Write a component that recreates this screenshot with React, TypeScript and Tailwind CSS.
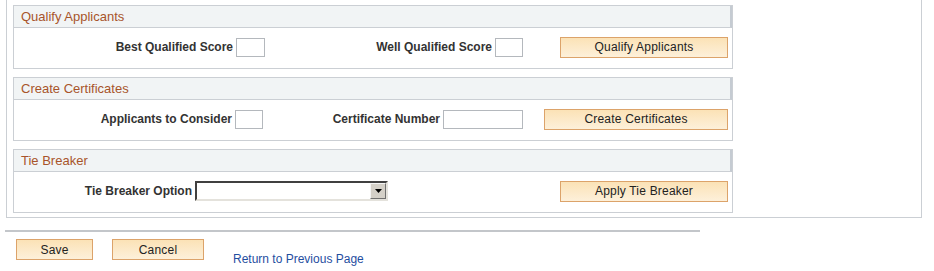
import React from "react";

const font = { fontFamily: '"Liberation Sans", Arial, sans-serif' };

function Section({ title, children }: { title: string; children: React.ReactNode }) {
  return (
    <div className="w-[720px] border border-[#cbcfd4] bg-white">
      <div className="h-[22px] flex items-center pl-[7px] bg-[#f1f4f5] border-b border-[#cbcfd4] border-r-2 border-r-[#c5cbd2] text-[13px] text-[#a8542b]">
        {title}
      </div>
      <div className="flex items-center h-[40px] pt-[8px] pb-[10px]">{children}</div>
    </div>
  );
}

function Label({ w, children }: { w: string; children: React.ReactNode }) {
  return <div className={`${w} shrink-0 text-right pr-[3px] text-[12px] font-bold text-[#333]`}>{children}</div>;
}

function Btn({ w, children }: { w: string; children: React.ReactNode }) {
  return (
    <button
      className={`${w} h-[21px] shrink-0 border border-[#dca36a] bg-gradient-to-b from-[#fbe2b6] to-[#fdf0da] text-[12px] text-[#222] tracking-[0.2px]`}
    >
      {children}
    </button>
  );
}

function TextBox({ w }: { w: string }) {
  return <input className={`${w} h-[19px] shrink-0 border border-[#b4b8bd] bg-white outline-none`} />;
}

export default function App() {
  return (
    <div className="w-[934px] h-[271px] bg-white" style={font}>
      <div className="ml-[6px] w-[916px] border-x border-b border-[#cbcfd4] pt-[5px] pb-[4px] pl-[6px] flex flex-col gap-[8px]">
        <Section title="Qualify Applicants">
          <Label w="w-[222px]">Best Qualified Score</Label>
          <TextBox w="w-[29px]" />
          <Label w="w-[230px]">Well Qualified Score</Label>
          <TextBox w="w-[28px]" />
          <div className="w-[37px] shrink-0" />
          <Btn w="w-[168px]">Qualify Applicants</Btn>
        </Section>
        <Section title="Create Certificates">
          <Label w="w-[221px]">Applicants to Consider</Label>
          <TextBox w="w-[28px]" />
          <Label w="w-[180px]">Certificate Number</Label>
          <TextBox w="w-[80px]" />
          <div className="w-[21px] shrink-0" />
          <Btn w="w-[184px]">Create Certificates</Btn>
        </Section>
        <Section title="Tie Breaker">
          <Label w="w-[181px]">Tie Breaker Option</Label>
          <div className="w-[193px] h-[20px] shrink-0 flex border-2 border-t-[#404040] border-l-[#404040] border-b-[#e4e2dc] border-r-[#e4e2dc] bg-white">
            <div className="flex-1" />
            <div className="w-[16px] h-full flex items-center justify-center bg-[#d4d0c8] border border-t-[#f4f4f4] border-l-[#f4f4f4] border-b-[#707070] border-r-[#707070]">
              <svg width="7" height="4" viewBox="0 0 7 4">
                <path d="M0 0h7L3.5 4z" fill="#000" />
              </svg>
            </div>
          </div>
          <div className="w-[172px] shrink-0" />
          <Btn w="w-[168px]">Apply Tie Breaker</Btn>
        </Section>
      </div>
      <div className="ml-[5px] mt-[12px] w-[695px] h-[2px] bg-[#c3c6ca]" />
      <div className="flex items-start pl-[16px] pt-[7px]">
        <Btn w="w-[77px]">Save</Btn>
        <div className="w-[19px] shrink-0" />
        <Btn w="w-[92px]">Cancel</Btn>
        <a href="#" className="ml-[29px] mt-[11px] text-[12px] text-[#1f4e9f]">
          Return to Previous Page
        </a>
      </div>
    </div>
  );
}
